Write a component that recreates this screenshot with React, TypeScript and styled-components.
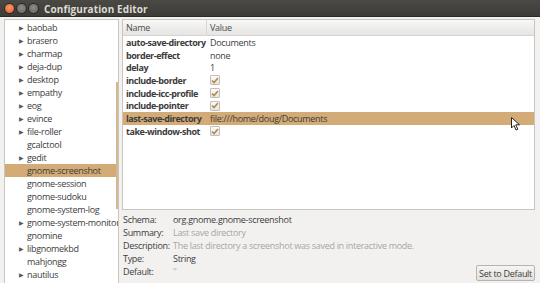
import React from 'react';
import styled, { createGlobalStyle } from 'styled-components';

const GlobalStyle = createGlobalStyle`
  html, body {
    margin: 0;
    padding: 0;
    background: #f2f1f0;
  }
  body {
    font-family: 'Open Sans', 'DejaVu Sans', sans-serif;
    font-size: 9px;
    letter-spacing: -0.3px;
    color: #3c3c3c;
  }
`;

const Window = styled.div`
  position: relative;
  width: 540px;
  height: 283px;
  overflow: hidden;
  display: flex;
  flex-direction: column;
  background: #f2f1f0;
`;

const TitleBar = styled.div`
  height: 17px;
  flex: none;
  display: flex;
  align-items: center;
  padding-left: 5px;
  gap: 3px;
  background: linear-gradient(#4a4945, #3c3b37);
  box-shadow: inset 0 -1px 0 #2a2a27;
`;

const WinButton = styled.span<{ $close?: boolean }>`
  width: 9px;
  height: 9px;
  border-radius: 50%;
  background: ${(p) =>
    p.$close
      ? 'radial-gradient(circle at 50% 40%, #f89c6a, #e0561e)'
      : 'radial-gradient(circle at 50% 40%, #8f8d87, #5f5e5a)'};
  box-shadow: 0 0 0 1px #2b2a27;
`;

const Title = styled.span`
  margin-left: 3px;
  color: #dfdbd2;
  font-weight: bold;
  font-size: 10px;
  letter-spacing: 0.1px;
`;

const Body = styled.div`
  flex: 1;
  min-height: 0;
  display: flex;
  gap: 3px;
  padding: 2px 3px 0 4px;
`;

const SidePane = styled.div`
  width: 113px;
  flex: none;
  background: #fff;
  border: 1px solid #c9c6c0;
  border-bottom: none;
  display: flex;
  position: relative;
  overflow: hidden;
`;

const SideList = styled.div`
  flex: 1;
  min-width: 0;
  padding-top: 1px;
`;

const SideItem = styled.div<{ $selected?: boolean }>`
  height: 13px;
  display: flex;
  align-items: center;
  padding-left: 14px;
  background: ${(p) => (p.$selected ? '#d3ab76' : 'transparent')};
  color: #3c3c3c;
  white-space: nowrap;
`;

const Expander = styled.span`
  width: 8px;
  flex: none;
  font-size: 6px;
  color: #5a5a5a;
`;

const SideScroll = styled.div`
  position: absolute;
  right: 0;
  top: 62px;
  bottom: 74px;
  width: 2px;
  background: #d3b78f;
`;

const Main = styled.div`
  flex: 1;
  display: flex;
  flex-direction: column;
`;

const Table = styled.div`
  height: 189px;
  flex: none;
  margin-right: 2px;
  background: #fff;
  border: 1px solid #c9c6c0;
  display: flex;
  flex-direction: column;
`;

const HeaderRow = styled.div`
  height: 15px;
  flex: none;
  display: grid;
  grid-template-columns: 83px 1fr;
  background: linear-gradient(#f7f7f6, #e6e5e3);
  border-bottom: 1px solid #d6d4d0;
`;

const HeaderCell = styled.div`
  display: flex;
  align-items: center;
  padding-left: 3px;
  color: #4c4c4c;
  & + & {
    border-left: 1px solid #d9d7d3;
  }
`;

const Row = styled.div<{ $selected?: boolean }>`
  height: 12.7px;
  flex: none;
  display: grid;
  grid-template-columns: 84px 1fr;
  align-items: center;
  background: ${(p) => (p.$selected ? '#d3ab76' : 'transparent')};
`;

const KeyCell = styled.div`
  padding-left: 3px;
  font-weight: bold;
  letter-spacing: -0.45px;
  white-space: nowrap;
  overflow: hidden;
`;

const ValueCell = styled.div`
  padding-left: 3px;
  white-space: nowrap;
  display: flex;
  align-items: center;
`;

const Check = styled.span`
  width: 8px;
  height: 8px;
  border: 1px solid #c3bfb8;
  border-radius: 1px;
  background: linear-gradient(#fbfbfa, #e7e5e1);
  display: flex;
  align-items: center;
  justify-content: center;
`;

const Info = styled.div`
  flex: 1;
  display: grid;
  grid-template-columns: 50px 1fr;
  grid-auto-rows: 13px;
  align-items: center;
  padding: 3px 0 0 1px;
  position: relative;
`;

const InfoLabel = styled.div`
  color: #3c3c3c;
`;

const InfoValue = styled.div<{ $muted?: boolean }>`
  color: ${(p) => (p.$muted ? '#a8a6a2' : '#3c3c3c')};
  white-space: nowrap;
`;

const DefaultButton = styled.button`
  position: absolute;
  right: 2px;
  bottom: 2px;
  height: 16px;
  padding: 0 2px;
  font-family: inherit;
  font-size: 9px;
  letter-spacing: -0.3px;
  color: #3c3c3c;
  border: 1px solid #b8b4ad;
  border-radius: 2px;
  background: linear-gradient(#f6f5f4, #e3e1dd);
`;

const Cursor = styled.svg`
  position: absolute;
  left: 511px;
  top: 117px;
`;

const sideItems: { name: string; expander: boolean }[] = [
  { name: 'baobab', expander: true },
  { name: 'brasero', expander: true },
  { name: 'charmap', expander: true },
  { name: 'deja-dup', expander: true },
  { name: 'desktop', expander: true },
  { name: 'empathy', expander: true },
  { name: 'eog', expander: true },
  { name: 'evince', expander: true },
  { name: 'file-roller', expander: true },
  { name: 'gcalctool', expander: false },
  { name: 'gedit', expander: true },
  { name: 'gnome-screenshot', expander: false },
  { name: 'gnome-session', expander: false },
  { name: 'gnome-sudoku', expander: false },
  { name: 'gnome-system-log', expander: false },
  { name: 'gnome-system-monitor', expander: true },
  { name: 'gnomine', expander: false },
  { name: 'libgnomekbd', expander: true },
  { name: 'mahjongg', expander: false },
  { name: 'nautilus', expander: true },
];

const keys: { name: string; value: string | boolean }[] = [
  { name: 'auto-save-directory', value: 'Documents' },
  { name: 'border-effect', value: 'none' },
  { name: 'delay', value: '1' },
  { name: 'include-border', value: true },
  { name: 'include-icc-profile', value: true },
  { name: 'include-pointer', value: true },
  { name: 'last-save-directory', value: 'file:///home/doug/Documents' },
  { name: 'take-window-shot', value: true },
];

const CheckMark = () => (
  <Check>
    <svg width="8" height="7" viewBox="0 0 8 7">
      <path d="M1 3.5 L3 5.5 L7 1" fill="none" stroke="#b08a4e" strokeWidth="1.6" />
    </svg>
  </Check>
);

const App: React.FC = () => {
  return (
    <Window>
      <GlobalStyle />
      <TitleBar>
        <WinButton $close />
        <WinButton />
        <WinButton />
        <Title>Configuration Editor</Title>
      </TitleBar>
      <Body>
        <SidePane>
          <SideList>
            {sideItems.map((item) => (
              <SideItem key={item.name} $selected={item.name === 'gnome-screenshot'}>
                <Expander>{item.expander ? '▶' : ''}</Expander>
                {item.name}
              </SideItem>
            ))}
          </SideList>
          <SideScroll />
        </SidePane>
        <Main>
          <Table>
            <HeaderRow>
              <HeaderCell>Name</HeaderCell>
              <HeaderCell>Value</HeaderCell>
            </HeaderRow>
            {keys.map((k) => (
              <Row key={k.name} $selected={k.name === 'last-save-directory'}>
                <KeyCell>{k.name}</KeyCell>
                <ValueCell>{typeof k.value === 'boolean' ? <CheckMark /> : k.value}</ValueCell>
              </Row>
            ))}
          </Table>
          <Info>
            <InfoLabel>Schema:</InfoLabel>
            <InfoValue>org.gnome.gnome-screenshot</InfoValue>
            <InfoLabel>Summary:</InfoLabel>
            <InfoValue $muted>Last save directory</InfoValue>
            <InfoLabel>Description:</InfoLabel>
            <InfoValue $muted>The last directory a screenshot was saved in interactive mode.</InfoValue>
            <InfoLabel>Type:</InfoLabel>
            <InfoValue>String</InfoValue>
            <InfoLabel>Default:</InfoLabel>
            <InfoValue $muted>''</InfoValue>
            <DefaultButton>Set to Default</DefaultButton>
          </Info>
        </Main>
      </Body>
      <Cursor width="10" height="14" viewBox="0 0 10 14">
        <path d="M0.5 0.5 L0.5 11 L3 8.5 L5 13 L6.8 12.2 L4.8 7.8 L8.5 7.8 Z" fill="#fff" stroke="#222" strokeWidth="1" />
      </Cursor>
    </Window>
  );
};

export default App;
